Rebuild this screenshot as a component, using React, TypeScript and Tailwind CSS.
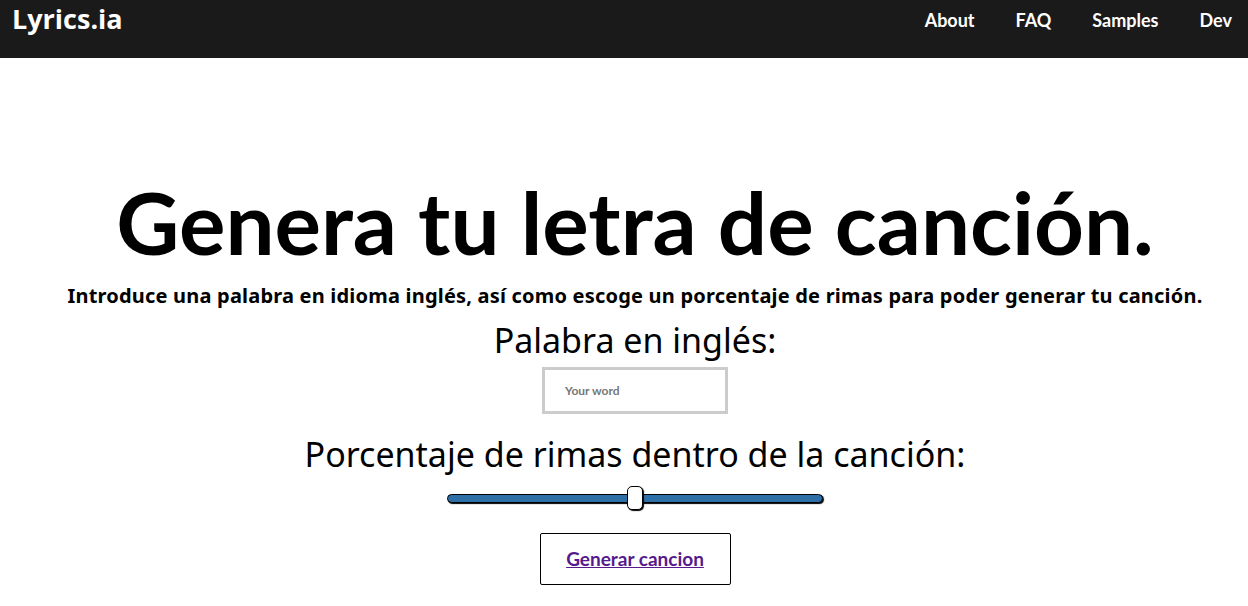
export default function App() {
  return (
    <div className="min-h-screen bg-white text-black">
      <nav className="h-[58px] bg-[#1b1a1a] flex items-start justify-between pl-3 pr-4">
        <a className="text-white font-['Open_Sans',sans-serif] font-bold text-[27px] leading-none mt-[5px]">
          Lyrics.ia
        </a>
        <ul className="flex gap-[41px] font-['Lato',sans-serif] font-bold text-[18px] text-white mt-[7px]">
          <li>About</li>
          <li>FAQ</li>
          <li>Samples</li>
          <li>Dev</li>
        </ul>
      </nav>
      <main className="flex flex-col items-center pt-[116px] pl-[22px] font-['Noto_Sans',sans-serif]">
        <h1 className="font-['Lato',sans-serif] font-bold text-[87px] leading-[96px]">Genera tu letra de canción.</h1>
        <p className="font-bold text-[20px] tracking-[0.2px] mt-[14px] leading-6">
          Introduce una palabra en idioma inglés, así como escoge un porcentaje de rimas para poder generar tu canción.
        </p>
        <label className="text-[34px] mt-[12px] leading-[40px]">Palabra en inglés:</label>
        <input
          placeholder="Your word"
          className="mt-[7px] w-[186px] h-[47px] border-[3px] border-[#cccccc] px-[20px] text-[12px] font-bold font-['Lato',sans-serif] placeholder:text-[#777] outline-none"
        />
        <label className="text-[34px] mt-[20px] leading-[40px]">Porcentaje de rimas dentro de la canción:</label>
        <div className="relative mt-[12px] w-[376px] h-[24px] flex items-center">
          <div className="w-full h-[9px] rounded-full bg-[#2f6fa8] border border-black shadow-[1px_1px_1px_#000]" />
          <div className="absolute left-[180px] top-0 w-[16px] h-[24px] rounded-[5px] bg-white border border-black shadow-[1px_1px_1px_#000]" />
        </div>
        <button className="mt-[23px] w-[191px] h-[52px] border border-black rounded-[2px] bg-white">
          <a href="#" className="text-[#551a8b] underline font-bold text-[19px] font-['Lato',sans-serif]">Generar cancion</a>
        </button>
      </main>
    </div>
  );
}
